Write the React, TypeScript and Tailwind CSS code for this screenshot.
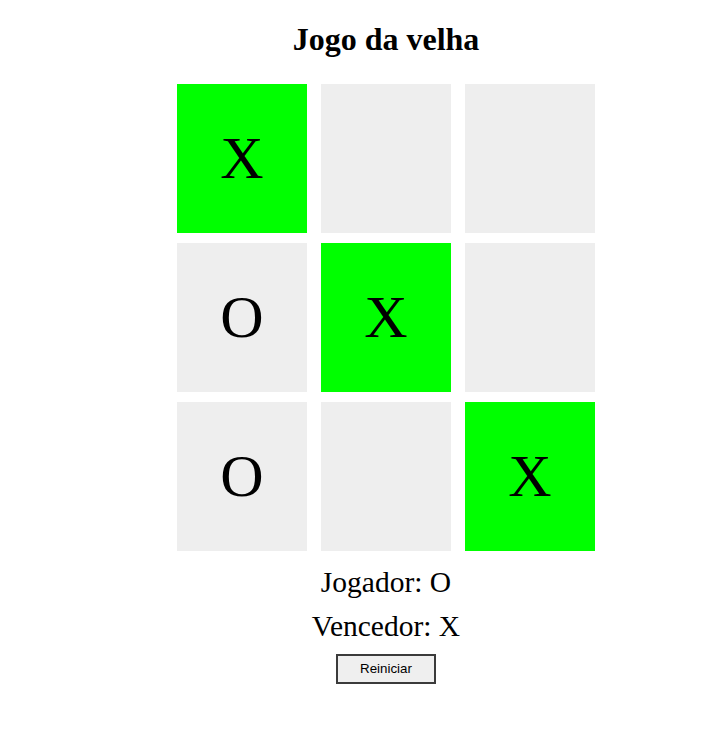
import { useState } from 'react'

const WIN = [0, 4, 8]

const App = () => {
  const [cells] = useState(['X', '', '', 'O', 'X', '', 'O', '', 'X'])

  return (
    <div className="flex flex-col items-center pl-[61px] font-['Liberation_Serif',serif] text-black bg-white min-h-[746px]">
      <h1 className="mt-[21px] text-[32px] font-bold leading-[37px]">{'Jogo da velha'}</h1>
      <div className="mt-[26px] grid grid-cols-[130px_130px_130px] gap-x-[14px] gap-y-[10px]">
        {cells.map((cell, i) => (
          <div
            key={i}
            className={
              WIN.includes(i)
                ? 'h-[149px] flex items-center justify-center text-[60px] leading-none pb-[2px] bg-[#00ff00]'
                : 'h-[149px] flex items-center justify-center text-[60px] leading-none pb-[2px] bg-[#eeeeee]'
            }
          >
            {cell}
          </div>
        ))}
      </div>
      <div className="mt-[15px] text-[29.5px] leading-[33px]">{'Jogador: O'}</div>
      <div className="mt-[11px] text-[29.5px] leading-[33px]">{'Vencedor: X'}</div>
      <button className="mt-[11px] w-[100px] h-[30px] border-2 border-[#3b3b3b] bg-[#efefef] font-['Liberation_Sans',sans-serif] text-[13.33px]">
        {'Reiniciar'}
      </button>
    </div>
  )
}

export default App
